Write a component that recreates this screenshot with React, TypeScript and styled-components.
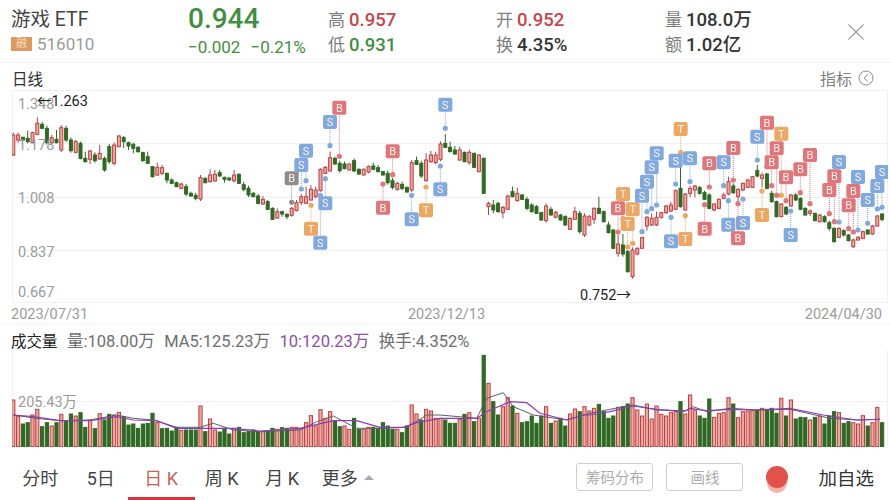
import React from 'react';
import styled, { createGlobalStyle } from 'styled-components';

const SANS = `Roboto, "Noto Sans CJK SC", "Liberation Sans", sans-serif`;
const RED = '#c8434a';
const GREEN = '#3f8f3f';
const CANDLE_GREEN = '#2f6a24';
const CANDLE_FILL = '#eda898';
const CANDLE_LINE = '#bb4049';

const GlobalStyle = createGlobalStyle`
  html, body {
    margin: 0;
    padding: 0;
    background: #fff;
    font-family: ${SANS};
  }
`;

const Page = styled.div`
  width: 890px;
  height: 500px;
  overflow: hidden;
  display: flex;
  flex-direction: column;
  background: #fff;
`;

const Header = styled.header`
  height: 63px;
  flex: none;
  box-sizing: border-box;
  display: flex;
  align-items: center;
  padding-left: 11px;
  position: relative;
  border-bottom: 1px solid #f3f3f3;
`;

const TitleBlock = styled.div`
  width: 177px;
  display: flex;
  flex-direction: column;
  gap: 3px;
`;

const Name = styled.div`
  font-size: 19.5px;
  line-height: 23px;
  color: #444;
`;

const CodeRow = styled.div`
  display: flex;
  align-items: center;
  gap: 5px;
  font-size: 17px;
  line-height: 20px;
  color: #9a9a9a;
`;

const Badge = styled.span`
  width: 21px;
  height: 14px;
  background: #dc9a5e;
  color: #f6dcc0;
  font-size: 11px;
  line-height: 14px;
  text-align: center;
`;

const QuoteBlock = styled.div`
  width: 140px;
  margin-top: -2px;
  color: ${GREEN};
`;

const Price = styled.div`
  font-size: 28px;
  line-height: 34px;
  font-weight: 500;
`;

const Change = styled.div`
  font-size: 17px;
  line-height: 22px;
  display: flex;
  gap: 10px;
  white-space: nowrap;
`;

const StatColumn = styled.div<{ $width: number }>`
  width: ${p => p.$width}px;
  display: flex;
  flex-direction: column;
  gap: 3px;
  padding-top: 2px;
`;

const Stat = styled.div`
  font-size: 17px;
  line-height: 22px;
  color: #7d7d7d;
  white-space: nowrap;
`;

const StatValue = styled.span<{ $color: string }>`
  color: ${p => p.$color};
  font-size: 18.5px;
  font-weight: 500;
  margin-left: 4px;
`;

const CloseButton = styled.div`
  position: absolute;
  right: 25px;
  top: 23px;
  line-height: 0;
`;

const IndicatorBar = styled.div`
  height: 27px;
  flex: none;
  box-sizing: border-box;
  display: flex;
  align-items: center;
  justify-content: space-between;
  padding: 3px 16px 0 12px;
  font-size: 15.5px;
  color: #333;
`;

const IndicatorLink = styled.div`
  display: flex;
  align-items: center;
  gap: 6px;
  font-size: 16px;
  color: #808080;
`;

const ChartPanel = styled.div<{ $height: number }>`
  position: relative;
  height: ${p => p.$height}px;
  flex: none;
  margin: 0 2px 0 12px;
`;

const ChartSvg = styled.svg`
  display: block;
  width: 100%;
  height: 100%;
  filter: blur(0.3px);
`;

const AxisLabel = styled.span<{ $top: number }>`
  position: absolute;
  left: 6px;
  top: ${p => p.$top}px;
  font-size: 14.5px;
  line-height: 16px;
  color: #9b9b9b;
`;

const PriceTag = styled.span<{ $left: number; $top: number }>`
  position: absolute;
  left: ${p => p.$left}px;
  top: ${p => p.$top}px;
  font-size: 14.5px;
  line-height: 16px;
  color: #1d1d1d;
  white-space: nowrap;
`;

const DateRow = styled.div`
  height: 22px;
  flex: none;
  box-sizing: border-box;
  display: flex;
  justify-content: space-between;
  align-items: center;
  padding: 2px 8px 0 11px;
  font-size: 14.5px;
  color: #9b9b9b;
  border-bottom: 1px solid #f6f6f6;
`;

const VolumeLegend = styled.div`
  height: 25px;
  flex: none;
  box-sizing: border-box;
  display: flex;
  align-items: center;
  gap: 9.5px;
  padding: 5px 0 0 11px;
  font-size: 16.5px;
  color: #6e6e6e;
  white-space: nowrap;
`;

const VolumeTitle = styled.span`
  font-size: 15.5px;
  color: #222;
`;

const PurpleText = styled.span`
  color: #8a4fa8;
`;

const TabBar = styled.nav`
  flex: 1;
  display: flex;
  align-items: center;
  padding-left: 10px;
`;

const Tab = styled.div<{ $active?: boolean }>`
  width: 60.5px;
  align-self: stretch;
  position: relative;
  display: flex;
  align-items: center;
  justify-content: center;
  padding-top: 7px;
  box-sizing: border-box;
  font-size: 18px;
  color: ${p => (p.$active ? '#c4625c' : '#444')};

  ${p =>
    p.$active &&
    `&::after {
      content: '';
      position: absolute;
      left: -3px;
      right: -3px;
      bottom: 0;
      height: 3px;
      background: #d8363a;
    }`}
`;

const MoreArrow = styled.span`
  width: 0;
  height: 0;
  margin: 0 -10px 0 6px;
  border-left: 5px solid transparent;
  border-right: 5px solid transparent;
  border-bottom: 5px solid #aaa;
`;

const ToolArea = styled.div`
  margin-left: auto;
  display: flex;
  align-items: center;
  padding: 6px 16px 0 0;
`;

const OutlineButton = styled.div<{ $gap?: number }>`
  width: 77px;
  height: 28px;
  box-sizing: border-box;
  margin-right: ${p => p.$gap ?? 0}px;
  border: 1px solid #cfcfcf;
  border-radius: 3px;
  display: flex;
  align-items: center;
  justify-content: center;
  font-size: 14.5px;
  color: #ababab;
`;

const RecordDot = styled.div`
  width: 22px;
  height: 22px;
  margin: 0 30px 0 23px;
  border-radius: 50%;
  background: #e2524a;
  box-shadow: 0 6px 0 -1px #f3b3a9;
`;

const AddWatch = styled.div`
  font-size: 18.5px;
  color: #333;
`;

/* candles, read off the picture: kind top,bottom[,wickTop,wickBottom] in 3x units */
const CANDLES_A = `r135,195,128,198 r135,150,128,158 g142,150,140,152 g145,155,122,160 r128,158,125,160 r100,133,82,136 g103,115,96,118 g115,158 r143,158,135,162 g148,158,120,160
r113,180 g115,150 g150,182 r155,187,150,190 g160,205,155,208 g205,215,185,218 r183,208,180,222 g195,212 r190,207,165,210 g205,240,200,245
g170,215 r165,220 r138,170,135,172 g143,155,138,175 g158,168,155,180 g163,175,158,190 g172,185,168,188 g188,212,185,215 g200,220,185,222 g230,260,228,263
r232,255,218,258 r233,250 g250,270,248,280 g270,280,265,283 g278,290,275,292 r282,295,278,298 g290,312 g310,318,305,320 g316,325 r263,327
g265,278,262,280 r255,275,238,278 r253,273,240,275 g248,258,240,260 g262,268,260,278 g264,270,262,272 r255,272,240,278 g253,280,250,282 g284,298 g295,315
g310,320,306,322 g318,340,312,343 r328,342,318,345 g335,358,330,360 g355,388,352,390 r365,384,355,386 g365,372,362,380 g373,380,370,388 r355,376,350,380 r338,362,330,364
r320,338,312,345 r320,340,290,342 r298,330,285,332 r300,320,290,325 r238,302,235,305 r232,250,228,252 r203,243,185,245 g205,222,200,224 g220,242 g222,236,215,238
r222,240,220,242 g212,243,205,245 g238,252,235,255 r238,255,235,257 r230,246,226,250 g228,238,218,240 g233,245,225,247 g245,255,243,257 g250,278 g272,292
r280,298,275,302 g283,295 g292,306,290,308 r218,300 g212,223,200,225 g220,258 r210,272,190,275 r195,215,183,218 r195,218,185,222 r162,208
g160,172,132,174 g172,185,155,187 g180,192,168,194 r180,210,170,212 g187,215,185,217 r187,218 g190,232,188,234 r195,245,192,247 g205,310,203,312
r340,350,335,375 g345,360,330,370 g340,365,335,368 r352,368,348,385 r318,358,314,360 g305,320,290,322 r310,332,293,335 g315,328,312,330 g328,355 g345,365,340,368
g350,370,345,372 g368,390,365,392 r348,392 g358,375,350,377 r367,382,362,385 g375,390,372,392 g380,405,376,407 r385,418,382,420 r365,388,350,390`;

const CANDLES_B = `g340,395 r348,405 r350,375,345,378 r325,358,322,372 g325,340,290,342 g335,365,332,368 g375,398,365,400 g390,445,388,447 r432,460,405,470 g435,462,402,470
g455,515,450,518 r450,530 r445,462,442,466 r413,445,410,447 r352,378,348,392 r355,375,340,378 r352,375,335,378 r338,352,335,356 r318,338,315,342 r315,333,305,336
r272,328,268,330 g265,320,175,323 r282,330,280,332 r265,280,258,292 r258,270,255,292 g263,280,258,284 g278,298,272,300 g285,325,280,328 r312,330,310,334 r298,325,295,328
r285,295,278,298 r245,282,230,286 g258,278,250,282 r268,290,265,310 r250,270,248,274 r240,262,238,264 r230,262,228,264 g212,228,195,232 r225,235,218,262 g222,265,218,268
g280,305,272,308 g305,350,302,352 r312,350,310,352 g322,342,318,345 r285,318,282,320 g285,300,280,303 g295,328,292,330 g325,345,322,347 r333,340,328,348 g340,362,338,364
r345,365,342,367 g350,365,346,368 g368,385,362,392 g385,425,382,428 r385,412,382,415 g392,405,388,410 g405,422,402,424 r420,440,415,444 r412,420,408,422 r395,415,392,418
g390,402,388,404 r378,402,375,404 r348,378,345,380 g342,358,340,364`;

/* volume bars: colour plus top edge, y = 350 + v / 3, baseline at 447 */
const VOLUME = `r150 r200 g222 g218 r195 r178 g230 g218 r228 g218 r193 g215 g192 r198 g188 g232 r210 g236 r191 g210
g193 r195 r187 g200 g225 g222 g235 g222 g220 g190 r218 g236 g235 g243 g232 r241 g240 g240 g240 r168
g245 r207 r240 g246 g235 g252 r235 g232 g248 g245 g240 g245 r245 g245 g235 r238 g233 g235 r232 r232
r235 r218 r197 r228 r179 r205 r185 g212 g230 r228 r238 g205 g238 r238 r232 g232 g235 g218 g228 g238
r238 g248 g228 r165 r192 g210 r178 r183 r205 r205 g210 g220 g220 r208 g193 r188 g215 r205 g16 r100
g155 g195 r170 r143 g168 r190 g218 g215 g198 g220 g198 r170 g220 r213 g205 g228 r192 r177 g185 r170
r183 r175 g163 g185 g205 g198 r172 g170 g162 r143 r180 r198 r162 r207 r168 r193 r198 r188 r185 g155
r192 r135 r180 g198 g205 g147 r202 r190 r188 r143 g162 r203 r185 r183 r182 g180 r175 g178 g175 g190
r145 g198 r150 g207 g202 g203 r210 g202 r198 g222 g198 g185 r188 g220 g215 r218 r222 r197 g228 r218
r172 g218`;

type Pair = [number, number];

const scale = (originX: number, originY: number, pairs: number[]): Pair[] => {
  const out: Pair[] = [];
  for (let i = 0; i < pairs.length; i += 2) {
    out.push([originX + pairs[i] / 3, originY + pairs[i + 1] / 3]);
  }
  return out;
};

const toPoints = (list: Pair[]) => list.map(([x, y]) => `${x.toFixed(1)},${y.toFixed(1)}`).join(' ');

const PURPLE_LINE = [
  ...scale(0, 350, [40, 195, 100, 200, 180, 212, 270, 212, 350, 200, 400, 210, 470, 212, 530, 235, 600, 235, 700, 235, 780, 243, 900, 235]),
  ...scale(300, 350, [100, 212, 170, 212, 240, 232, 310, 232, 350, 218, 420, 205, 530, 205, 560, 185, 630, 155, 680, 158, 720, 190, 800, 210, 850, 195]),
  ...scale(590, 350, [0, 195, 60, 185, 130, 168, 200, 178, 280, 185, 300, 175, 350, 182, 420, 178, 500, 180, 600, 175, 700, 195, 800, 210, 870, 208]),
];

const GRAY_LINE = [
  ...scale(0, 350, [40, 195, 110, 205, 180, 212, 270, 210, 350, 195, 400, 205, 460, 210, 530, 232, 600, 232, 640, 220, 700, 240, 780, 245, 900, 240]),
  ...scale(300, 350, [50, 215, 100, 198, 170, 235, 240, 235, 320, 232, 380, 195, 420, 195, 530, 205, 560, 145, 610, 128, 640, 170, 700, 195, 800, 210]),
  ...scale(590, 350, [0, 190, 60, 178, 130, 165, 200, 180, 290, 182, 310, 170, 350, 185, 420, 175, 500, 180, 600, 178, 720, 205, 800, 210, 870, 208]),
];

type MarkerKind = 'B' | 'S' | 'T' | 'G';
type Marker = { kind: MarkerKind; x: number; box: number; dot: number };

const MARKER_COLOR: Record<MarkerKind, string> = {
  B: '#e0757a',
  S: '#7fa9df',
  T: '#eca862',
  G: '#8d8d8d',
};

const markers = (originX: number, originY: number, list: [MarkerKind, number, number, number][]): Marker[] =>
  list.map(([kind, x, box, dot]) => ({
    kind,
    x: originX + x / 3,
    box: originY + box / 3,
    dot: originY + dot / 3,
  }));

const MARKERS: Marker[] = [
  ...markers(280, 90, [
    ['G', 35, 265, 337], ['S', 78, 182, 272], ['S', 64, 225, 297], ['T', 93, 416, 346],
    ['S', 121, 458, 316], ['S', 136, 340, 266], ['B', 178, 53, 199], ['S', 150, 96, 167],
    ['B', 338, 184, 254], ['B', 309, 353, 282], ['S', 395, 388, 316], ['T', 438, 361, 291],
    ['S', 481, 298, 228], ['S', 496, 44, 115],
  ]),
  ...markers(580, 100, [
    ['T', 129, 282, 355], ['T', 158, 328, 430], ['B', 114, 325, 396], ['T', 143, 372, 441],
    ['S', 230, 160, 315], ['S', 215, 202, 326], ['S', 201, 245, 335], ['S', 186, 287, 395],
    ['T', 302, 87, 158], ['S', 287, 182, 252], ['S', 330, 175, 245], ['S', 273, 424, 352],
    ['T', 316, 417, 347], ['B', 388, 190, 261], ['B', 374, 386, 314], ['S', 431, 187, 257],
    ['B', 460, 144, 240], ['S', 445, 374, 302], ['S', 489, 369, 297], ['B', 474, 415, 311],
    ['S', 532, 110, 180], ['T', 604, 101, 286], ['B', 561, 68, 200], ['B', 590, 145, 286],
    ['B', 575, 187, 257], ['T', 546, 345, 273], ['B', 618, 232, 302], ['S', 632, 405, 333],
    ['B', 661, 208, 278], ['B', 690, 165, 311], ['S', 777, 186, 366], ['B', 763, 229, 365],
    ['B', 748, 270, 341], ['S', 834, 231, 390], ['B', 820, 273, 396], ['B', 806, 316, 386],
    ['S', 863, 300, 370], ['S', 906, 216, 322], ['S', 892, 258, 327],
  ]),
];

const barX = (i: number) => 13.3 + 4.8 * i;

const parseCandles = (text: string, originY: number, start: number) =>
  text
    .trim()
    .split(/\s+/)
    .map((token, n) => {
      const [top, bottom, wickTop, wickBottom] = token.slice(1).split(',').map(Number);
      return {
        up: token[0] === 'r',
        i: start + n,
        top: originY + top / 3,
        bottom: originY + bottom / 3,
        wickTop: originY + (wickTop ?? top - 8) / 3,
        wickBottom: originY + (wickBottom ?? bottom + 6) / 3,
      };
    });

const CANDLE_DATA = [...parseCandles(CANDLES_A, 90, 0)];
const CANDLE_ALL = [...CANDLE_DATA, ...parseCandles(CANDLES_B, 100, CANDLE_DATA.length)];

const VOLUME_DATA = VOLUME.trim()
  .split(/\s+/)
  .map((token, i) => ({ up: token[0] === 'r', i, top: 350 + Number(token.slice(1)) / 3 }));

const PriceChart = () => (
  <ChartSvg viewBox="12 90 876 213" preserveAspectRatio="none">
    {[90.5, 143.5, 197.5, 250.5, 302.5].map(y => (
      <line key={y} x1={12} x2={888} y1={y} y2={y} stroke="#f1f1f1" />
    ))}
    <line x1={12.5} x2={12.5} y1={90} y2={303} stroke="#f1f1f1" />
    <line x1={887.5} x2={887.5} y1={90} y2={303} stroke="#f1f1f1" />
    {CANDLE_ALL.map(c => {
      const x = barX(c.i);
      const stroke = c.up ? CANDLE_LINE : CANDLE_GREEN;
      return (
        <g key={c.i}>
          <line x1={x} x2={x} y1={c.wickTop} y2={c.wickBottom} stroke={stroke} />
          <rect
            x={x - 1.5}
            y={c.top}
            width={3}
            height={c.bottom - c.top}
            fill={c.up ? CANDLE_FILL : CANDLE_GREEN}
            stroke={stroke}
          />
        </g>
      );
    })}
    {MARKERS.map((m, n) => {
      const color = MARKER_COLOR[m.kind];
      return (
        <g key={n}>
          <line x1={m.x} x2={m.x} y1={m.box} y2={m.dot} stroke={color} strokeDasharray="1 1" />
          <circle cx={m.x} cy={m.dot} r={2.6} fill={color} />
          <rect x={m.x - 7} y={m.box - 7} width={14} height={14} rx={2} fill={color} />
          <text
            x={m.x}
            y={m.box + 4}
            textAnchor="middle"
            fontSize={11}
            fontFamily={SANS}
            fill="#fdf3ee"
          >
            {m.kind === 'G' ? 'B' : m.kind}
          </text>
        </g>
      );
    })}
  </ChartSvg>
);

const VolumeChart = () => (
  <ChartSvg viewBox="12 350 876 97" preserveAspectRatio="none">
    <line x1={12} x2={888} y1={401.5} y2={401.5} stroke="#f1f1f1" />
    <line x1={12.5} x2={12.5} y1={350} y2={447} stroke="#f1f1f1" />
    <line x1={887.5} x2={887.5} y1={350} y2={447} stroke="#f1f1f1" />
    {VOLUME_DATA.map(v => (
      <rect
        key={v.i}
        x={barX(v.i) - 1.6}
        y={v.top}
        width={3.2}
        height={446.6 - v.top}
        fill={v.up ? CANDLE_FILL : CANDLE_GREEN}
        stroke={v.up ? CANDLE_LINE : CANDLE_GREEN}
      />
    ))}
    <polyline points={toPoints(GRAY_LINE.slice().sort((a, b) => a[0] - b[0]))} fill="none" stroke="#5d5d66" strokeWidth={1} />
    <polyline points={toPoints(PURPLE_LINE.slice().sort((a, b) => a[0] - b[0]))} fill="none" stroke="#8a3fae" strokeWidth={1.2} />
  </ChartSvg>
);

const TABS = ['分时', '5日', '日 K', '周 K', '月 K'];

const App: React.FC = () => (
  <Page>
    <GlobalStyle />
    <Header>
      <TitleBlock>
        <Name>游戏 ETF</Name>
        <CodeRow>
          <Badge>融</Badge>
          516010
        </CodeRow>
      </TitleBlock>
      <QuoteBlock>
        <Price>0.944</Price>
        <Change>
          <span>−0.002</span>
          <span>−0.21%</span>
        </Change>
      </QuoteBlock>
      <StatColumn $width={168}>
        <Stat>高<StatValue $color={RED}>0.957</StatValue></Stat>
        <Stat>低<StatValue $color={GREEN}>0.931</StatValue></Stat>
      </StatColumn>
      <StatColumn $width={169}>
        <Stat>开<StatValue $color={RED}>0.952</StatValue></Stat>
        <Stat>换<StatValue $color="#333">4.35%</StatValue></Stat>
      </StatColumn>
      <StatColumn $width={120}>
        <Stat>量<StatValue $color="#333">108.0万</StatValue></Stat>
        <Stat>额<StatValue $color="#333">1.02亿</StatValue></Stat>
      </StatColumn>
      <CloseButton>
        <svg width="18" height="18" viewBox="0 0 18 18" fill="none" stroke="#9a9a9a" strokeWidth="1.1">
          <path d="M1.5 1.5 L16.5 16.5 M16.5 1.5 L1.5 16.5" />
        </svg>
      </CloseButton>
    </Header>

    <IndicatorBar>
      <span>日线</span>
      <IndicatorLink>
        指标
        <svg width="16" height="16" viewBox="0 0 16 16" fill="none" stroke="#8c8c8c" strokeWidth="1">
          <circle cx="8" cy="8" r="7" />
          <path d="M9.8 4.4 L6 8 L9.8 11.6" />
        </svg>
      </IndicatorLink>
    </IndicatorBar>

    <ChartPanel $height={213}>
      <PriceChart />
      <AxisLabel $top={7}>1.348</AxisLabel>
      <AxisLabel $top={48}>1.178</AxisLabel>
      <AxisLabel $top={101}>1.008</AxisLabel>
      <AxisLabel $top={155}>0.837</AxisLabel>
      <AxisLabel $top={195}>0.667</AxisLabel>
      <PriceTag $left={25} $top={4}>←1.263</PriceTag>
      <PriceTag $left={568} $top={198}>0.752→</PriceTag>
    </ChartPanel>

    <DateRow>
      <span>2023/07/31</span>
      <span>2023/12/13</span>
      <span>2024/04/30</span>
    </DateRow>

    <VolumeLegend>
      <VolumeTitle>成交量</VolumeTitle>
      <span>量:108.00万</span>
      <span>MA5:125.23万</span>
      <PurpleText>10:120.23万</PurpleText>
      <span>换手:4.352%</span>
    </VolumeLegend>

    <ChartPanel $height={97}>
      <VolumeChart />
      <AxisLabel $top={45}>205.43万</AxisLabel>
    </ChartPanel>

    <TabBar>
      {TABS.map(t => (
        <Tab key={t} $active={t === '日 K'}>{t}</Tab>
      ))}
      <Tab>
        更多
        <MoreArrow />
      </Tab>
      <ToolArea>
        <OutlineButton $gap={13}>筹码分布</OutlineButton>
        <OutlineButton>画线</OutlineButton>
        <RecordDot />
        <AddWatch>加自选</AddWatch>
      </ToolArea>
    </TabBar>
  </Page>
);

export default App;
